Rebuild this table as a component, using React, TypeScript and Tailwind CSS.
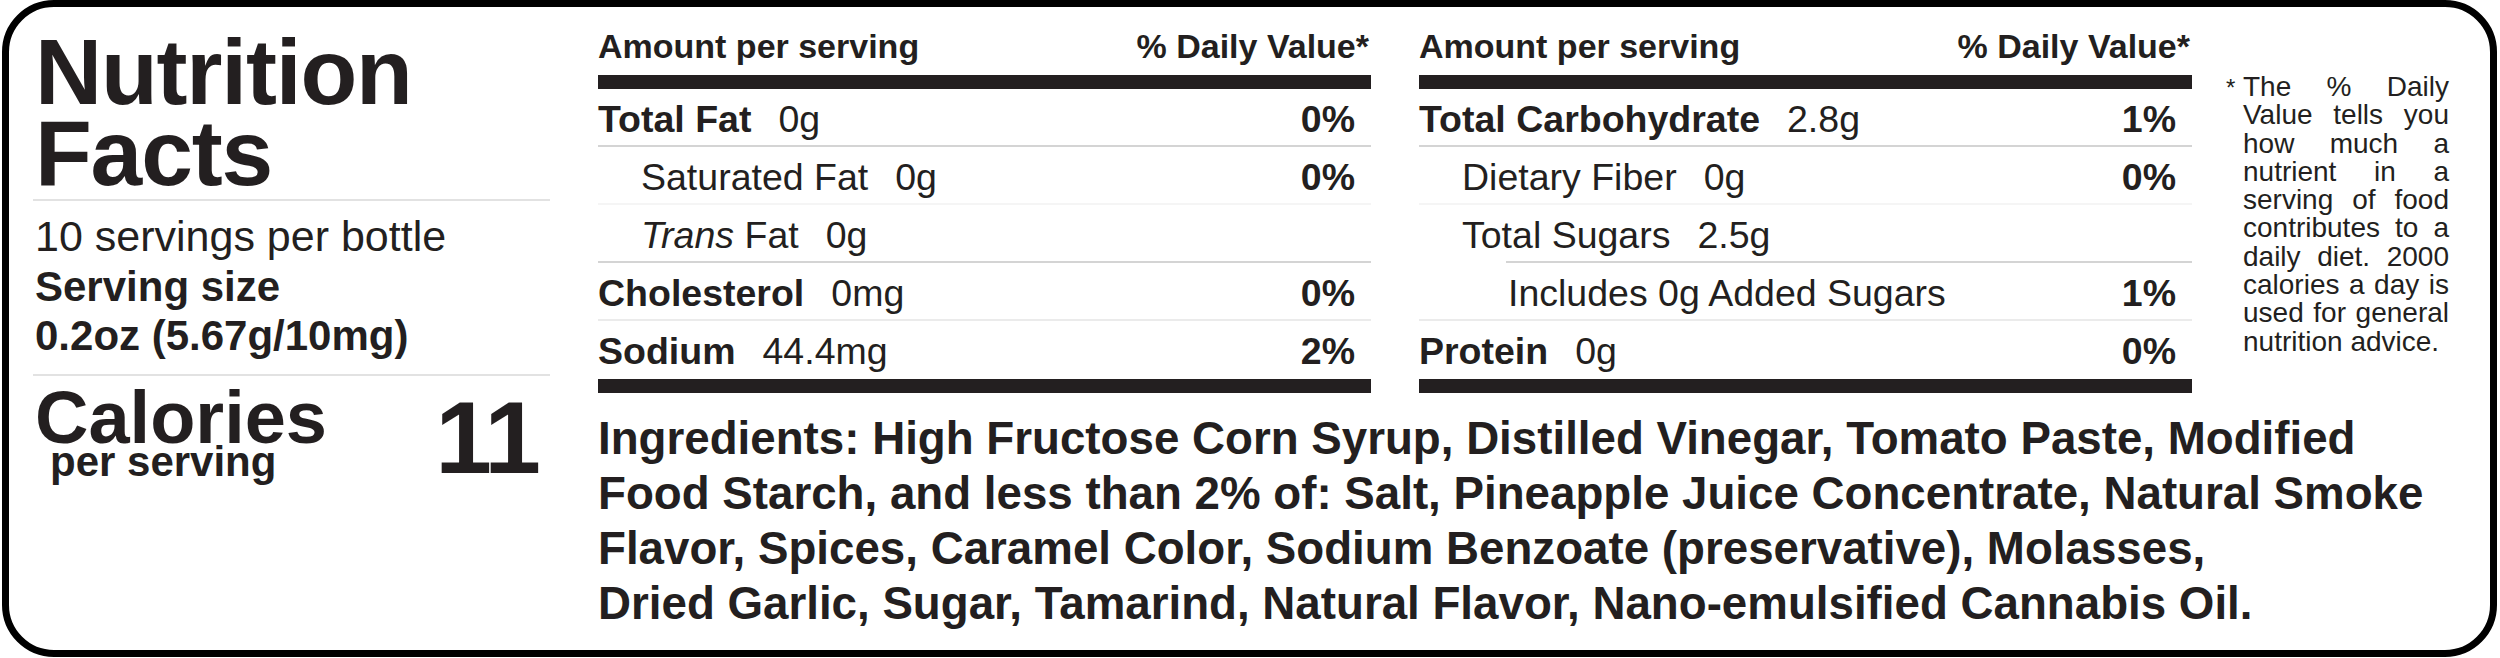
import type { ReactNode } from 'react'

type Row = {
  label: ReactNode
  amount?: string
  dv?: string
  bold?: boolean
  indent?: string
  sep?: string
  sepIndent?: string
  tall?: boolean
}

const leftRows: Row[] = [
  { label: 'Total Fat', amount: '0g', dv: '0%', bold: true, sep: 'bg-[#d4d4d4]' },
  { label: 'Saturated Fat', amount: '0g', dv: '0%', indent: 'pl-[43px]', sep: 'bg-[#f5f5f5]' },
  { label: <><i>Trans</i> Fat</>, amount: '0g', indent: 'pl-[43px]', sep: 'bg-[#d4d4d4]' },
  { label: 'Cholesterol', amount: '0mg', dv: '0%', bold: true, sep: 'bg-[#ebebeb]' },
  { label: 'Sodium', amount: '44.4mg', dv: '2%', bold: true, tall: true },
]

const rightRows: Row[] = [
  { label: 'Total Carbohydrate', amount: '2.8g', dv: '1%', bold: true, sep: 'bg-[#d4d4d4]' },
  { label: 'Dietary Fiber', amount: '0g', dv: '0%', indent: 'pl-[43px]', sep: 'bg-[#f5f5f5]' },
  { label: 'Total Sugars', amount: '2.5g', indent: 'pl-[43px]', sep: 'bg-[#d4d4d4]', sepIndent: 'ml-[87px]' },
  { label: 'Includes 0g Added Sugars', dv: '1%', indent: 'pl-[89px]', sep: 'bg-[#ebebeb]' },
  { label: 'Protein', amount: '0g', dv: '0%', bold: true, tall: true },
]

function NutrientTable({ rows }: { rows: Row[] }) {
  return (
    <div className="w-[773px] pt-[19px]">
      {/* HEADER */}
      <div className="flex justify-between text-[34px] font-bold leading-[40px] pr-[2px]">
        <span>Amount per serving</span>
        <span>% Daily Value*</span>
      </div>
      <div className="mt-[9px] h-[14px] bg-[#231f20]" />

      {/* ROWS */}
      {rows.map((r, i) => (
        <div key={i}>
          <div className={`flex justify-between text-[37.5px] leading-[60px] pr-[16px] ${r.tall ? 'h-[58px]' : 'h-[56px]'} ${r.indent ?? ''}`}>
            <span className="whitespace-nowrap">
              <span className={r.bold ? 'font-bold' : ''}>{r.label}</span>
              {r.amount && <span className="ml-[27px]">{r.amount}</span>}
            </span>
            {r.dv && <span className="font-bold">{r.dv}</span>}
          </div>
          {r.sep && <div className={`h-[2px] ${r.sep} ${r.sepIndent ?? ''}`} />}
        </div>
      ))}
      <div className="h-[14px] bg-[#231f20]" />
    </div>
  )
}

export default function App() {
  return (
    <div className="w-[2500px] h-[658px] bg-white pl-[2px] pr-[3px] pb-[1px] text-[#231f20] font-['Liberation_Sans',Arial,sans-serif]">
      <div className="h-full border-[7px] border-black rounded-[52px] flex pl-[26px]">

        {/* LEFT COLUMN */}
        <div className="w-[513px] pt-[25px] flex flex-col">
          <h1 className="text-[93px] font-bold leading-[81px] tracking-[-1.2px]">
            Nutrition<br />Facts
          </h1>
          <div className="mt-[5px] -ml-[2px] -mr-[2px] h-[2px] bg-[#e2e2e2]" />
          <div className="mt-[9px] text-[43px] leading-[52px]">10 servings per bottle</div>
          <div className="text-[42px] font-bold leading-[49px]">Serving size</div>
          <div className="text-[42px] font-bold leading-[49px]">0.2oz (5.67g/10mg)</div>
          <div className="mt-[14px] -ml-[2px] -mr-[2px] h-[2px] bg-[#e2e2e2]" />
          <div className="mt-[12px] flex justify-between">
            <div>
              <div className="text-[74px] font-bold leading-[60px]">Calories</div>
              <div className="pl-[15px] text-[42px] font-bold leading-[28px]">per serving</div>
            </div>
            <div className="mt-[10px] mr-[9px] text-[102px] font-bold leading-[80px] tracking-[-2px]">11</div>
          </div>
        </div>

        {/* MIDDLE */}
        <div className="ml-[50px] w-[1854px] flex flex-col">
          <div className="flex">
            <NutrientTable rows={leftRows} />
            <div className="ml-[48px]">
              <NutrientTable rows={rightRows} />
            </div>
            <div className="ml-[34px] pt-[66px] flex items-baseline">
              <span className="w-[17px] text-[24px] leading-[28.3px]">*</span>
              <p className="w-[206px] text-[28px] leading-[28.3px] text-justify">
                The % Daily Value tells you how much a nutrient in a serving of food contributes to a daily diet. 2000 calories a day is used for general nutrition advice.
              </p>
            </div>
          </div>

          {/* INGREDIENTS */}
          <div className="mt-[18px] text-[45.7px] font-bold leading-[55px] whitespace-nowrap">
            <div>Ingredients: High Fructose Corn Syrup, Distilled Vinegar, Tomato Paste, Modified</div>
            <div>Food Starch, and less than 2% of: Salt, Pineapple Juice Concentrate, Natural Smoke</div>
            <div>Flavor, Spices, Caramel Color, Sodium Benzoate (preservative), Molasses,</div>
            <div>Dried Garlic, Sugar, Tamarind, Natural Flavor, Nano-emulsified Cannabis Oil.</div>
          </div>
        </div>

      </div>
    </div>
  )
}
